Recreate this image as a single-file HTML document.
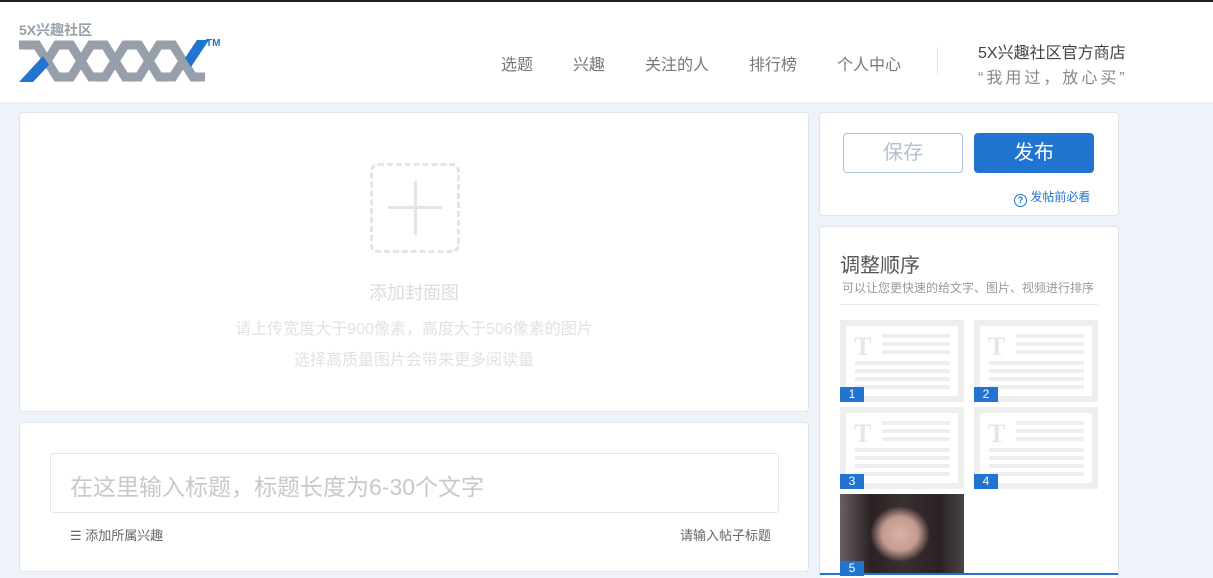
<!DOCTYPE html>
<html><head><meta charset="utf-8"><style>
*{margin:0;padding:0;box-sizing:border-box}
body{width:1213px;height:575px;overflow:hidden;background:#eef2f9;font-family:"Liberation Sans","Noto Sans CJK SC",sans-serif;position:relative}
.top{position:absolute;left:0;top:0;width:1213px;height:2px;background:#222}
.hdr{position:absolute;left:0;top:2px;width:1213px;height:100px;background:#fff}
.nav{position:absolute;top:49px;font-size:16px;color:#777}
.card{position:absolute;background:#fff;border:1px solid #dfe4ec;border-radius:4px}
.abs{position:absolute}
.tile{position:absolute;width:124px;height:82px;border:6px solid #eee;background:#fff}
.tile .T{position:absolute;left:8px;top:6px;font:bold 26px "Liberation Serif",serif;color:#e6e6e6}
.tile .l{position:absolute;height:4px;background:#eee}
.num{position:absolute;width:24px;height:15px;background:#2174d0;color:#fff;font-size:12px;line-height:15px;text-align:center}
</style></head><body>
<div class="top"></div>
<div class="hdr">
 <div class="abs" style="left:19px;top:18px;font-size:14px;font-weight:bold;color:#97a0aa">5X兴趣社区</div>
 <svg class="abs" style="left:19px;top:38px" width="190" height="42" viewBox="0 0 190 42">
  <g fill="none" stroke="#97a0aa" stroke-width="9" stroke-linejoin="miter">
   <path d="M0 5 L18 5 L38 37 L52 37 L72 5 L86 5 L106 37 L120 37 L140 5 L154 5 L174 37 L186 37"/>
   <path d="M28 21 L38 5 L52 5 L72 37 L86 37 L106 5 L120 5 L140 37 L154 37 L166 18"/>
  </g>
  <path d="M0 42 L14 42 L30 25 L24 16 Z" fill="#2174d0"/>
  <path d="M166 18 L178 0 L190 0 L172 27 Z" fill="#2174d0"/>
 </svg>
 <div class="abs" style="left:206px;top:36px;font-size:10px;font-weight:bold;color:#2174d0">TM</div>
 <div class="nav" style="left:501px">选题</div>
 <div class="nav" style="left:573px">兴趣</div>
 <div class="nav" style="left:645px">关注的人</div>
 <div class="nav" style="left:749px">排行榜</div>
 <div class="nav" style="left:837px">个人中心</div>
 <div class="abs" style="left:937px;top:45px;width:1px;height:28px;background:#e5e5e5"></div>
 <div class="abs" style="left:978px;top:37px;font-size:16px;color:#444">5X兴趣社区官方商店</div>
 <div class="abs" style="left:978px;top:62px;font-size:16px;color:#888;letter-spacing:3px">“我用过，放心买”</div>
</div>

<div class="card" style="left:19px;top:112px;width:790px;height:300px">
 <div class="abs" style="left:350px;top:50px;width:90px;height:90px;border:3px dashed #e3e3e8;border-radius:8px"></div>
 <div class="abs" style="left:368px;top:93px;width:54px;height:3px;background:#e3e3e8"></div>
 <div class="abs" style="left:394px;top:68px;width:3px;height:54px;background:#e3e3e8"></div>
 <div class="abs" style="left:0;width:788px;top:166px;text-align:center;font-size:18px;color:#dcdce0">添加封面图</div>
 <div class="abs" style="left:0;width:788px;top:202px;text-align:center;font-size:16px;color:#e2e2e6">请上传宽度大于900像素，高度大于506像素的图片</div>
 <div class="abs" style="left:0;width:788px;top:233px;text-align:center;font-size:16px;color:#e2e2e6">选择高质量图片会带来更多阅读量</div>
</div>

<div class="card" style="left:19px;top:422px;width:790px;height:150px">
 <div class="abs" style="left:30px;top:30px;width:729px;height:60px;border:1px solid #e6e6ea;border-radius:3px;padding:14px 19px;font-size:23px;color:#c8c8cc">在这里输入标题，标题长度为6-30个文字</div>
 <div class="abs" style="left:50px;top:102px;font-size:13px;color:#666">☰ 添加所属兴趣</div>
 <div class="abs" style="left:660px;top:102px;font-size:13px;color:#666">请输入帖子标题</div>
</div>

<div class="card" style="left:819px;top:112px;width:300px;height:104px">
 <div class="abs" style="left:23px;top:20px;width:120px;height:40px;border:1px solid #aebfd4;border-radius:4px;text-align:center;line-height:38px;font-size:20px;color:#b5c0cf">保存</div>
 <div class="abs" style="left:154px;top:20px;width:120px;height:40px;background:#2174d0;border-radius:4px;text-align:center;line-height:40px;font-size:20px;color:#fff">发布</div>
 <div class="abs" style="left:194px;top:75px;font-size:12px;color:#2174d0"><span style="display:inline-block;width:13px;height:13px;border:1.5px solid #2174d0;border-radius:50%;font-size:9px;line-height:10px;text-align:center;font-weight:bold;vertical-align:-2px">?</span> 发帖前必看</div>
</div>

<div class="card" style="left:819px;top:226px;width:300px;height:352px;border-bottom:none">
 <div class="abs" style="left:20px;top:22px;font-size:20px;color:#555">调整顺序</div>
 <div class="abs" style="left:22px;top:52px;font-size:12px;color:#999">可以让您更快速的给文字、图片、视频进行排序</div>
 <div class="abs" style="left:20px;top:77px;width:258px;height:1px;background:#e8e8e8"></div>
</div>
<div class="tile" style="left:840px;top:320px"><div class="T">T</div><div class="l" style="left:36px;top:8px;width:68px"></div><div class="l" style="left:36px;top:16px;width:68px"></div><div class="l" style="left:36px;top:24px;width:68px"></div><div class="l" style="left:9px;top:35px;width:95px"></div><div class="l" style="left:9px;top:43px;width:95px"></div><div class="l" style="left:9px;top:51px;width:95px"></div><div class="l" style="left:9px;top:59px;width:95px"></div></div>
<div class="tile" style="left:974px;top:320px"><div class="T">T</div><div class="l" style="left:36px;top:8px;width:68px"></div><div class="l" style="left:36px;top:16px;width:68px"></div><div class="l" style="left:36px;top:24px;width:68px"></div><div class="l" style="left:9px;top:35px;width:95px"></div><div class="l" style="left:9px;top:43px;width:95px"></div><div class="l" style="left:9px;top:51px;width:95px"></div><div class="l" style="left:9px;top:59px;width:95px"></div></div>
<div class="tile" style="left:840px;top:407px"><div class="T">T</div><div class="l" style="left:36px;top:8px;width:68px"></div><div class="l" style="left:36px;top:16px;width:68px"></div><div class="l" style="left:36px;top:24px;width:68px"></div><div class="l" style="left:9px;top:35px;width:95px"></div><div class="l" style="left:9px;top:43px;width:95px"></div><div class="l" style="left:9px;top:51px;width:95px"></div><div class="l" style="left:9px;top:59px;width:95px"></div></div>
<div class="tile" style="left:974px;top:407px"><div class="T">T</div><div class="l" style="left:36px;top:8px;width:68px"></div><div class="l" style="left:36px;top:16px;width:68px"></div><div class="l" style="left:36px;top:24px;width:68px"></div><div class="l" style="left:9px;top:35px;width:95px"></div><div class="l" style="left:9px;top:43px;width:95px"></div><div class="l" style="left:9px;top:51px;width:95px"></div><div class="l" style="left:9px;top:59px;width:95px"></div></div>
<div class="abs" style="left:840px;top:494px;width:124px;height:81px;background:radial-gradient(ellipse 30px 28px at 60px 40px,#d9b4aa 0%,#c49a90 60%,transparent 100%),linear-gradient(90deg,#6b5f60 0%,#2a2224 25%,#3a3032 50%,#2a2224 80%,#4b4446 100%)"></div>
<div class="num" style="left:840px;top:387px">1</div>
<div class="num" style="left:974px;top:387px">2</div>
<div class="num" style="left:840px;top:474px">3</div>
<div class="num" style="left:974px;top:474px">4</div>
<div class="num" style="left:840px;top:561px">5</div>
<div class="abs" style="left:820px;top:573px;width:298px;height:2px;background:#2174d0"></div>
</body></html>
